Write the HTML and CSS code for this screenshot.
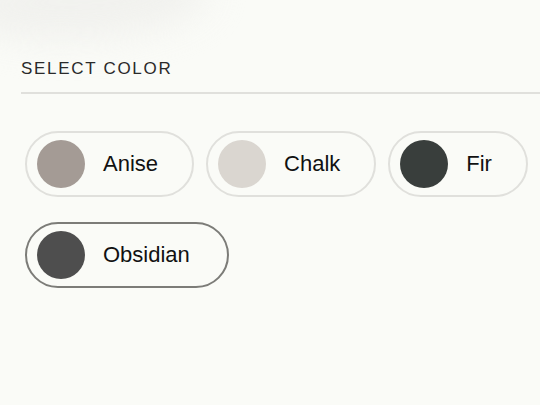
FILE: index.html
```html
<!DOCTYPE html>
<html lang="en">
<head>
<meta charset="utf-8">
<title>Select color</title>
<link rel="stylesheet" href="styles.css">
</head>
<body>
<div class="haze"></div>
<section class="picker">
  <h2 class="picker-title">SELECT COLOR</h2>
  <div class="divider"></div>
  <div class="swatches">
    <button class="pill"><span class="dot dot-anise"></span><span class="name">Anise</span></button>
    <button class="pill"><span class="dot dot-chalk"></span><span class="name">Chalk</span></button>
    <button class="pill"><span class="dot dot-fir"></span><span class="name">Fir</span></button>
    <button class="pill pill-selected"><span class="dot dot-obsidian"></span><span class="name">Obsidian</span></button>
  </div>
</section>
</body>
</html>
```
FILE: styles.css
```css
html, body {
  margin: 0;
  padding: 0;
}
body {
  width: 540px;
  height: 405px;
  overflow: hidden;
  background: #fafbf7;
  font-family: "Liberation Sans", Arial, sans-serif;
  color: #141414;
  position: relative;
}
.haze {
  position: absolute;
  left: -40px;
  top: -40px;
  width: 250px;
  height: 80px;
  background: #efefec;
  border-radius: 50%;
  filter: blur(18px);
  transform: rotate(-4deg);
  opacity: 0.8;
}
.picker {
  position: relative;
  padding: 59px 0 0 21px;
}
.picker-title {
  margin: 0;
  font-size: 17px;
  line-height: 20px;
  font-weight: 400;
  letter-spacing: 1.7px;
  color: #2a2a2a;
}
.divider {
  margin-top: 13px;
  height: 2px;
  background: #e0e0dc;
}
.swatches {
  display: flex;
  flex-wrap: wrap;
  column-gap: 12px;
  row-gap: 25px;
  padding: 37px 0 0 4px;
}
.pill {
  display: flex;
  align-items: center;
  gap: 18px;
  padding: 7px 34px 7px 10px;
  border: 2px solid #e0e0dc;
  border-radius: 40px;
  background: transparent;
  font-family: inherit;
  font-size: 22px;
  color: #111;
  cursor: pointer;
}
.pill-selected {
  border-color: #7c7c78;
  padding-right: 37px;
}
.dot {
  width: 48px;
  height: 48px;
  border-radius: 50%;
  flex: none;
}
.dot-anise { background: #a49b95; }
.dot-chalk { background: #dad6d0; }
.dot-fir { background: #393e3c; }
.dot-obsidian { background: #4e4e4e; }
.name {
  line-height: 26px;
}
```
